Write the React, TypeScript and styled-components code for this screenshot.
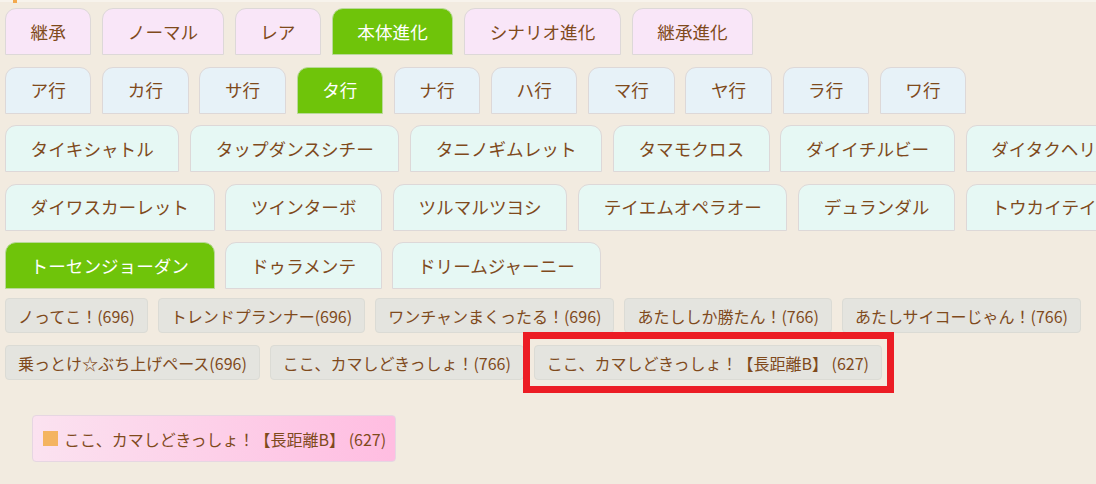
import React from 'react';
import styled, { createGlobalStyle, css } from 'styled-components';

const Global = createGlobalStyle`
  html, body { margin: 0; padding: 0; background: #f2ebe0; }
  body { font-family: "Noto Sans CJK JP", "Noto Sans", sans-serif; color: #7f4a1c; }
  * { box-sizing: border-box; }
`;

const Page = styled.div`
  width: 1096px;
  height: 484px;
  overflow: hidden;
  background: #f2ebe0;
`;

const TopStrip = styled.div`
  height: 2px;
  background: #f7f3ec;
  display: flex;
`;

const TopTick = styled.span`
  margin-left: 13px;
  width: 4px;
  height: 3px;
  background: #f3a94e;
`;

const Content = styled.div`
  padding: 6px 0 0 5px;
`;

const TabSection = styled.div`
  display: flex;
  flex-direction: column;
  gap: 11.5px;
`;

const TabRow = styled.div`
  display: flex;
  gap: 10.8px;
  flex-wrap: nowrap;
`;

type Variant = 'category' | 'kana' | 'name';

const bgFor: Record<Variant, string> = {
  category: '#f9e6f8',
  kana: '#e7f2f8',
  name: '#e6f8f4',
};

const Tab = styled.div<{ $variant: Variant; $active?: boolean }>`
  flex-shrink: 0;
  height: 47px;
  padding: 0 24.6px;
  display: flex;
  align-items: center;
  justify-content: center;
  white-space: nowrap;
  font-size: 17.6px;
  line-height: 1;
  border: 1px solid #ddd8d8;
  border-radius: 11px 11px 0 0;
  background: ${(p) => bgFor[p.$variant]};
  color: #7f4a1c;
  ${(p) =>
    p.$active &&
    css`
      background: #6fc40a;
      border-color: #b9d99a;
      color: #ffffff;
    `}
`;

const TagList = styled.div`
  margin-top: 9px;
  display: flex;
  flex-wrap: wrap;
  gap: 12px 10px;
  width: 1090px;
`;

const Tag = styled.div<{ $highlight?: boolean }>`
  position: relative;
  height: 35px;
  padding: 0 12px;
  display: flex;
  align-items: center;
  white-space: nowrap;
  font-size: 16px;
  line-height: 1;
  background: #e4e4df;
  border: 1px solid #dbdbd5;
  border-radius: 4px;
  color: #7f4a1c;
  ${(p) =>
    p.$highlight &&
    css`
      &::after {
        content: '';
        position: absolute;
        top: -14px;
        bottom: -14px;
        left: -12px;
        right: -13px;
        border: 7px solid #ec1c24;
        pointer-events: none;
      }
    `}
`;

const Selected = styled.div`
  margin: 35px 0 0 27px;
  height: 47px;
  padding: 0 9px 0 10px;
  display: inline-flex;
  align-items: center;
  gap: 6px;
  font-size: 16px;
  line-height: 1;
  white-space: pre;
  color: #7f4a1c;
  background: linear-gradient(90deg, #fbe2f0 0%, #ffbde1 100%);
  border: 1px solid #e6d6e2;
  border-radius: 4px;
`;

const Swatch = styled.span`
  width: 15px;
  height: 15px;
  background: #f4b460;
  flex-shrink: 0;
`;

const categories = ['継承', 'ノーマル', 'レア', '本体進化', 'シナリオ進化', '継承進化'];
const kana = ['ア行', 'カ行', 'サ行', 'タ行', 'ナ行', 'ハ行', 'マ行', 'ヤ行', 'ラ行', 'ワ行'];
const names = [
  'タイキシャトル', 'タップダンスシチー', 'タニノギムレット', 'タマモクロス', 'ダイイチルビー', 'ダイタクヘリオス',
  'ダイワスカーレット', 'ツインターボ', 'ツルマルツヨシ', 'テイエムオペラオー', 'デュランダル', 'トウカイテイオー',
  'トーセンジョーダン', 'ドゥラメンテ', 'ドリームジャーニー',
];
const tags = [
  'ノってこ！(696)',
  'トレンドプランナー(696)',
  'ワンチャンまくったる！(696)',
  'あたししか勝たん！(766)',
  'あたしサイコーじゃん！(766)',
  '乗っとけ☆ぶち上げペース(696)',
  'ここ、カマしどきっしょ！(766)',
  'ここ、カマしどきっしょ！【長距離B】 (627)',
];

const chunk = <T,>(arr: T[], n: number): T[][] => {
  const out: T[][] = [];
  for (let i = 0; i < arr.length; i += n) out.push(arr.slice(i, i + n));
  return out;
};

export default function App() {
  return (
    <Page>
      <Global />
      <TopStrip>
        <TopTick />
      </TopStrip>
      <Content>
        <TabSection>
          <TabRow>
            {categories.map((c) => (
              <Tab key={c} $variant="category" $active={c === '本体進化'}>
                {c}
              </Tab>
            ))}
          </TabRow>
          <TabRow>
            {kana.map((k) => (
              <Tab key={k} $variant="kana" $active={k === 'タ行'}>
                {k}
              </Tab>
            ))}
          </TabRow>
          {chunk(names, 6).map((row, i) => (
            <TabRow key={i}>
              {row.map((n) => (
                <Tab key={n} $variant="name" $active={n === 'トーセンジョーダン'}>
                  {n}
                </Tab>
              ))}
            </TabRow>
          ))}
        </TabSection>
        <TagList>
          {tags.map((t, i) => (
            <Tag key={t} $highlight={i === tags.length - 1}>
              {t}
            </Tag>
          ))}
        </TagList>
        <Selected>
          <Swatch />
          {'ここ、カマしどきっしょ！【長距離B】 (627)'}
        </Selected>
      </Content>
    </Page>
  );
}
